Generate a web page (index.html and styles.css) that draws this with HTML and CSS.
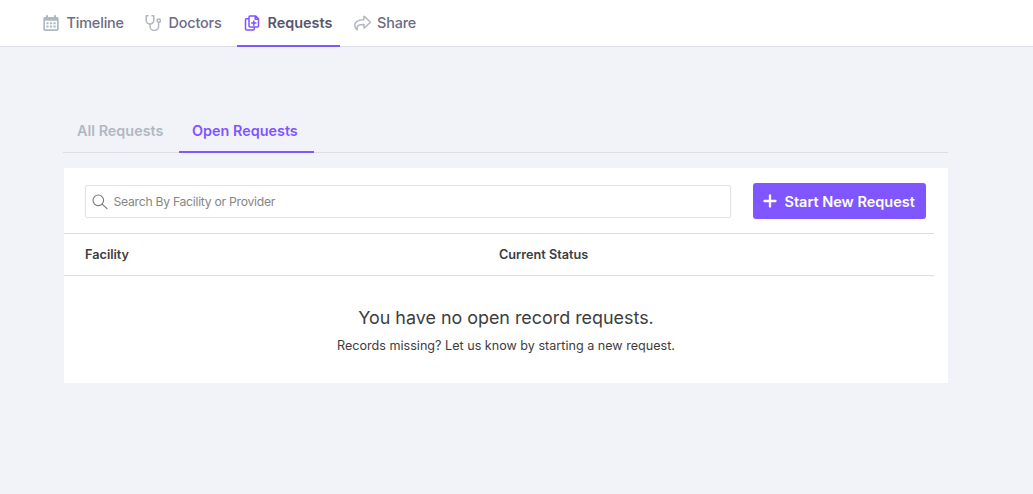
FILE: index.html
```html
<!DOCTYPE html>
<html lang="en">
<head>
<meta charset="utf-8">
<title>Open Requests</title>
<link rel="stylesheet" href="styles.css">
</head>
<body>
<nav class="nav">
  <a class="nav-item timeline">
    <svg class="nav-icon" viewBox="0 0 16 16"><path class="solid" d="M3 2V.8Q3 0 4 0t1 .8V2h6V.8q0-.8 1-.8t1 .8V2h1q1.700 0 1.700 1.500v10.800q0 1.600-1.700 1.600H2q-1.700 0-1.700-1.600V3.500Q.3 2 2 2zM2 5.700v8q0 .5.5.5h11q.5 0 .5-.5v-8z"/><path class="dots" d="M3.400 8.300h2.200M6.900 8.300h2.200m1.300 0h2.200M3.400 11.600h2.200m1.300 0h2.200m1.300 0h2.200"/></svg>
    <span>Timeline</span>
  </a>
  <a class="nav-item doctors">
    <svg class="nav-icon" viewBox="0 0 16 16"><path d="M3 .8H1.200v4.400a3.800 3.800 0 0 0 7.600 0V.8H7M5 9v2.200a4.300 4.300 0 0 0 8.600 0V7.500"/><circle cx="13.700" cy="5.600" r="1.700"/></svg>
    <span>Doctors</span>
  </a>
  <a class="nav-item requests active">
    <svg class="nav-icon" viewBox="0 0 16 16"><path d="M6 .9h5.500l3 3v7q0 1-1 1H6q-1 0-1-1v-9q0-1 1-1zM5 3.800H2.500q-1 0-1 1v9.300q0 1 1 1h6.800q1 0 1-1V12M11.200 1v3.200h3.200M9.800 6v4.200M7.700 8.100h4.200"/></svg>
    <span>Requests</span>
  </a>
  <a class="nav-item share">
    <svg class="nav-icon wide" viewBox="0 0 17 16"><path d="M9.900 1.700v3C3.500 4.800.8 7 .8 10.600q0 2.400 2 4 .7.400.5-.4C2.500 10.400 5 9.600 9.900 9.500v3q0 .9.700.3l5.300-5.100q.5-.5 0-1l-5.300-5.200q-.7-.6-.7.200z"/></svg>
    <span>Share</span>
  </a>
</nav>
<main class="content">
  <div class="tabs">
    <a class="tab">All Requests</a>
    <a class="tab selected">Open Requests</a>
  </div>
  <section class="card">
    <div class="toolbar">
      <label class="search">
        <svg class="search-icon" viewBox="0 0 16 16"><circle cx="6.300" cy="6.300" r="5.300"/><path d="M10.200 10.200l4.800 4.500"/></svg>
        <input class="search-input" type="text" placeholder="Search By Facility or Provider">
      </label>
      <button class="start">
        <svg class="plus" viewBox="0 0 14 14"><path d="M7 1.500v11M1.500 7h11"/></svg>
        <span>Start New Request</span>
      </button>
    </div>
    <div class="table-head"><span>Facility</span><span>Current Status</span></div>
    <div class="empty">
      <h2 class="empty-title">You have no open record requests.</h2>
      <p class="empty-text">Records missing? Let us know by starting a new request.</p>
    </div>
  </section>
</main>
</body>
</html>
```
FILE: styles.css
```css
* { box-sizing: border-box; }
body {
  margin: 0;
  min-height: 494px;
  background: #f2f3f8;
  color: #3d3d40;
  font-family: Inter, "Liberation Sans", sans-serif;
}
.nav {
  display: flex;
  height: 47px;
  padding-left: 34px;
  background: #fff;
  border-bottom: 1px solid #dcdfe9;
}
.nav-item {
  display: flex;
  align-items: center;
  gap: 7.5px;
  height: 47px;
  padding-left: 9px;
  border-bottom: 2px solid transparent;
  color: #6c6c82;
  font-size: 14.4px;
  font-weight: 500;
  letter-spacing: -.15px;
}
.timeline { width: 102px; }
.doctors { width: 101px; }
.requests { width: 103px; padding-left: 7px; }
.share { padding-left: 14px; gap: 6px; }
.nav-item.active { border-color: #7f56ff; color: #56566e; font-weight: 600; letter-spacing: 0; }
.nav-icon {
  width: 16px;
  height: 16px;
  fill: none;
  stroke: #b0b8c1;
  stroke-width: 1.5;
  stroke-linejoin: round;
  stroke-linecap: round;
}
.nav-icon.wide { width: 17px; }
.nav-icon .solid { fill: #b0b8c1; stroke: none; fill-rule: evenodd; }
.nav-icon .dots { stroke-width: 2; stroke-linecap: butt; }
.active .nav-icon { stroke: #7f56ff; }
.content { width: 885px; margin: 64px 0 0 63px; }
.tabs { display: flex; height: 42px; border-bottom: 1px solid #dcdde5; }
.tab {
  width: 116px;
  height: 42px;
  padding-left: 14px;
  border-bottom: 2px solid transparent;
  color: #b0b8c2;
  font-size: 14.4px;
  font-weight: 600;
  line-height: 40px;
}
.tab.selected { width: 135px; padding-left: 13px; border-color: #7f56ff; color: #7f56ff; }
.card { height: 215px; margin: 15px 0 0 1px; background: #fff; }
.toolbar { display: flex; height: 65px; padding: 15px 22px 0 21px; justify-content: space-between; }
.search {
  display: flex;
  width: 646px;
  height: 33px;
  margin-top: 2px;
  padding-left: 6px;
  align-items: center;
  gap: 5.5px;
  border: 1px solid #e2e2e4;
  border-radius: 2px;
}
.search-icon { width: 16px; height: 16px; fill: none; stroke: #777; stroke-width: 1.1; stroke-linecap: round; }
.search-input { flex: 1; padding: 0; border: 0; outline: 0; background: transparent; font: 400 12.200px Inter, sans-serif; letter-spacing: -.27px; }
.search-input::placeholder { color: #858585; opacity: 1; }
.start {
  display: flex;
  width: 173px;
  height: 36px;
  padding: 0 0 0 10px;
  align-items: center;
  gap: 7.5px;
  border: 0;
  border-radius: 3px;
  background: #7f56ff;
  color: #fff;
  font: 600 14.5px Inter, sans-serif;
}
.plus { width: 14px; height: 14px; fill: none; stroke: #fff; stroke-width: 2.3; stroke-linecap: round; }
.table-head {
  display: grid;
  grid-template-columns: 414px 1fr;
  width: 870px;
  height: 43px;
  padding-left: 21px;
  align-items: center;
  border-top: 1px solid #dddde0;
  border-bottom: 1px solid #dddde0;
  font-size: 12.7px;
  font-weight: 600;
}
.empty { padding-top: 30px; text-align: center; }
.empty-title { margin: 0; font-size: 17.900px; font-weight: 400; line-height: 24px; }
.empty-text { margin: 8px 0 0; font-size: 12.6px; line-height: 16px; }
```
